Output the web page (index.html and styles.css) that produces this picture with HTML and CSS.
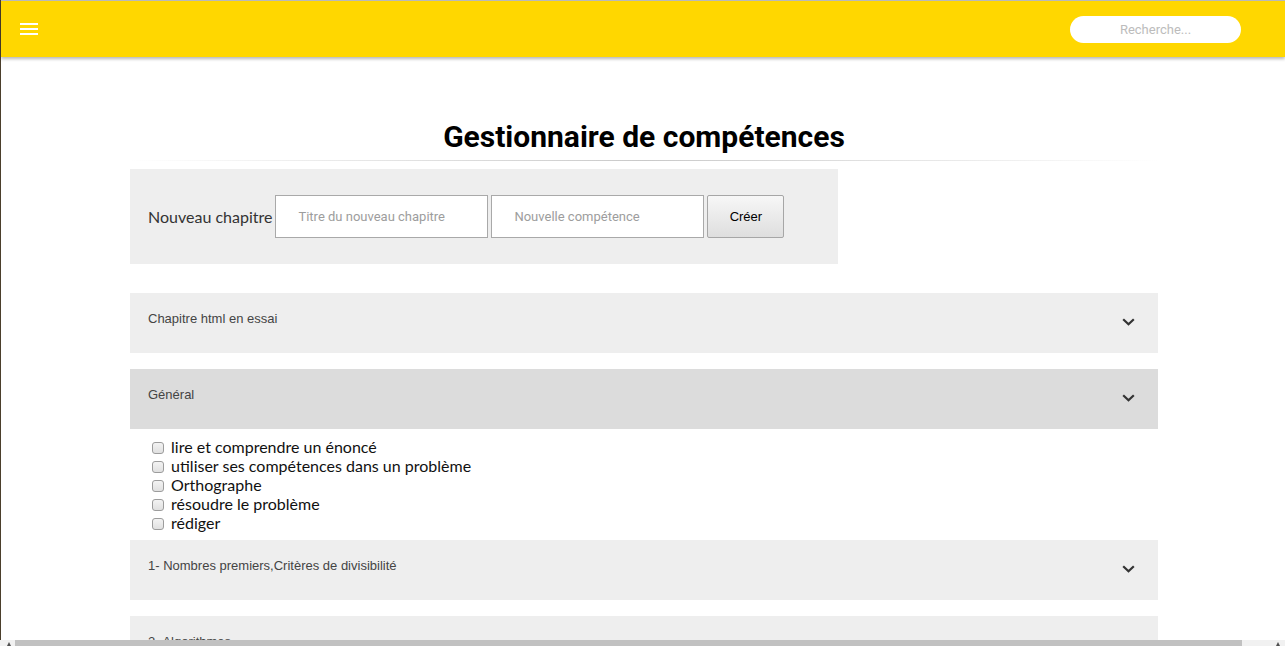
FILE: index.html
```html
<!DOCTYPE html>
<html lang="fr">
<head>
<meta charset="utf-8">
<title>Gestionnaire de compétences</title>
<link rel="stylesheet" href="styles.css">
</head>
<body>
<div class="page">
  <header class="topbar">
    <button class="menu-btn" aria-label="Menu">
      <span></span><span></span><span></span>
    </button>
    <input class="search" type="text" placeholder="Recherche...">
  </header>

  <main class="main">
    <h1 class="title">Gestionnaire de compétences</h1>
    <hr class="sep">

    <form class="new-chapter">
      <label class="new-label">Nouveau chapitre</label>
      <input class="field" type="text" placeholder="Titre du nouveau chapitre">
      <input class="field" type="text" placeholder="Nouvelle compétence">
      <button class="create" type="button">Créer</button>
    </form>

    <div class="chapters">
      <section class="chapter">
        <div class="chapter-head">
          <span class="chapter-name">Chapitre html en essai</span>
          <svg class="chev" width="13" height="8" viewBox="0 0 13 8"><polyline points="1.2,1.2 6.5,6.3 11.8,1.2" fill="none" stroke="#333" stroke-width="2.2"/></svg>
        </div>
      </section>

      <section class="chapter open">
        <div class="chapter-head active">
          <span class="chapter-name">Général</span>
          <svg class="chev" width="13" height="8" viewBox="0 0 13 8"><polyline points="1.2,1.2 6.5,6.3 11.8,1.2" fill="none" stroke="#333" stroke-width="2.2"/></svg>
        </div>
        <ul class="skills">
          <li><label><input type="checkbox" class="cb"> lire et comprendre un énoncé</label></li>
          <li><label><input type="checkbox" class="cb"> utiliser ses compétences dans un problème</label></li>
          <li><label><input type="checkbox" class="cb"> Orthographe</label></li>
          <li><label><input type="checkbox" class="cb"> résoudre le problème</label></li>
          <li><label><input type="checkbox" class="cb"> rédiger</label></li>
        </ul>
      </section>

      <section class="chapter">
        <div class="chapter-head">
          <span class="chapter-name">1- Nombres premiers,Critères de divisibilité</span>
          <svg class="chev" width="13" height="8" viewBox="0 0 13 8"><polyline points="1.2,1.2 6.5,6.3 11.8,1.2" fill="none" stroke="#333" stroke-width="2.2"/></svg>
        </div>
      </section>

      <section class="chapter">
        <div class="chapter-head">
          <span class="chapter-name">2- Algorithmes</span>
          <svg class="chev" width="13" height="8" viewBox="0 0 13 8"><polyline points="1.2,1.2 6.5,6.3 11.8,1.2" fill="none" stroke="#333" stroke-width="2.2"/></svg>
        </div>
      </section>
    </div>
  </main>

  <div class="hscroll" aria-hidden="true">
    <span class="arrow arrow-left"></span>
    <span class="thumb"></span>
    <span class="arrow arrow-right"></span>
  </div>
</div>
</body>
</html>
```

FILE: styles.css
```css
* { box-sizing: border-box; }

html, body {
  margin: 0;
  padding: 0;
  background: #fff;
  overflow: hidden;
}

body {
  font-family: "Liberation Sans", Arial, sans-serif;
  color: #333;
}

.page {
  min-height: 646px;
  border-left: 1px solid #4b3f2c;
}

/* ---------- top bar ---------- */
.topbar {
  height: 57px;
  border-top: 1px solid #b9b9b9;
  background: #ffd700;
  box-shadow: 0 2px 3px rgba(0, 0, 0, 0.28);
  display: flex;
  align-items: center;
  justify-content: space-between;
  padding: 0 44px 0 19px;
  position: relative;
  z-index: 2;
}

.menu-btn {
  width: 18px;
  height: 12px;
  padding: 0;
  border: 0;
  background: transparent;
  display: flex;
  flex-direction: column;
  justify-content: space-between;
}

.menu-btn span {
  display: block;
  height: 2px;
  background: #fff;
}

.search {
  width: 171px;
  height: 27px;
  border: 0;
  border-radius: 14px;
  background: #fff;
  text-align: center;
  font-family: Roboto, sans-serif;
  font-size: 13px;
  color: #333;
  outline: none;
  margin-top: 1px;
}

.search::placeholder { color: #bcbcbc; }

/* ---------- main ---------- */
.main {
  width: 1028px;
  margin-left: 129px;
  padding-top: 63px;
}

.title {
  margin: 0;
  text-align: center;
  font-family: Roboto, sans-serif;
  font-weight: 700;
  font-size: 30px;
  line-height: 33px;
  color: #000;
}

.sep {
  height: 1px;
  border: 0;
  margin: 7px 0 8px;
  background: linear-gradient(to right, rgba(200,200,200,0), #c9c9c9 50%, rgba(200,200,200,0));
}

/* ---------- new chapter form ---------- */
.new-chapter {
  width: 708px;
  height: 95px;
  background: #eee;
  display: flex;
  align-items: center;
  padding-left: 18px;
  gap: 3px;
  margin: 0;
}

.new-label {
  font-family: Lato, sans-serif;
  font-size: 16px;
  color: #333;
}

.field {
  width: 213px;
  height: 43px;
  border: 1px solid #a9a9a9;
  background: #fff;
  padding: 0 0 0 22px;
  font-family: Roboto, sans-serif;
  font-size: 13px;
  color: #333;
  outline: none;
}

.field::placeholder { color: #9d9d9d; }

.create {
  width: 77px;
  height: 43px;
  border: 1px solid #a6a6a6;
  border-radius: 2px;
  background: linear-gradient(#f7f7f7, #dedede);
  font-family: "Liberation Sans", Arial, sans-serif;
  font-size: 13px;
  color: #000;
  padding: 0;
}

/* ---------- chapters ---------- */
.chapters {
  margin-top: 29px;
}

.chapter {
  margin-bottom: 16px;
}

.chapter.open {
  margin-bottom: 8px;
}

.chapter-head {
  height: 60px;
  background: #eee;
  display: flex;
  justify-content: space-between;
  align-items: flex-start;
  padding: 18px 23px 0 18px;
}

.chapter-head.active {
  background: #dcdcdc;
}

.chapter-name {
  font-family: "Liberation Sans", Arial, sans-serif;
  font-size: 13px;
  line-height: 15px;
  color: #444;
}

.chev {
  margin-top: 7px;
  display: block;
}

.skills {
  list-style: none;
  margin: 0;
  padding: 8px 0 0 18px;
}

.skills li {
  font-family: Lato, sans-serif;
  font-size: 16px;
  line-height: 19px;
  color: #111;
}

.cb {
  -webkit-appearance: none;
  appearance: none;
  width: 12px;
  height: 12px;
  margin: 0 3px 0 4px;
  border: 1px solid #9c9c9c;
  border-radius: 3px;
  background: linear-gradient(#f3f3f3, #e0e0e0);
  vertical-align: -1px;
}

/* ---------- fake horizontal scrollbar ---------- */
.hscroll {
  position: fixed;
  left: 0;
  right: 0;
  bottom: 0;
  height: 6px;
  background: #f1f1f1;
  z-index: 5;
}

.thumb {
  position: absolute;
  left: 15px;
  width: 1227px;
  top: 0;
  bottom: 0;
  background: #c1c1c1;
}

.arrow {
  position: absolute;
  top: 2px;
  width: 0;
  height: 0;
  border-left: 2px solid transparent;
  border-right: 2px solid transparent;
  border-bottom: 4px solid #505050;
}

.arrow-left { left: 7px; }
.arrow-right { right: 5px; }
```
